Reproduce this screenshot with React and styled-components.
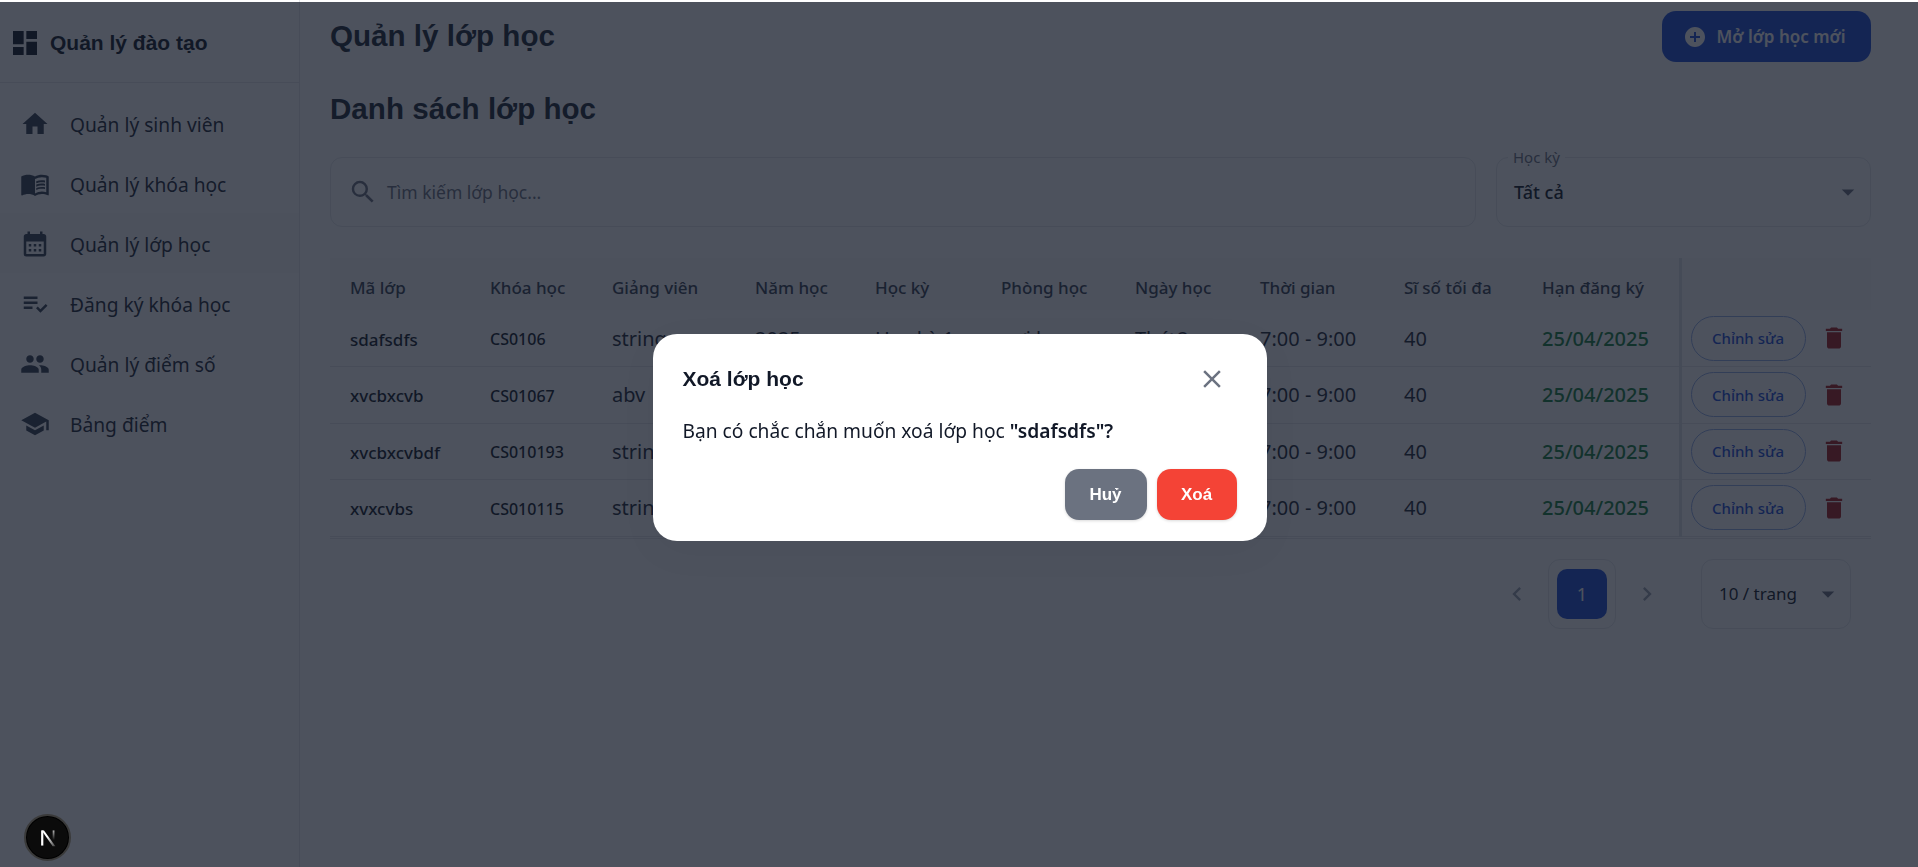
import React from 'react'
import styled, { createGlobalStyle } from 'styled-components'
import {
  MdDashboard, MdHome, MdMenuBook, MdCalendarMonth, MdPlaylistAddCheck, MdPeople, MdSchool,
  MdSearch, MdAddCircle, MdDelete, MdClose, MdChevronLeft, MdChevronRight, MdArrowDropDown,
} from 'react-icons/md'

const GlobalStyle = createGlobalStyle`
  html, body {
    margin: 0;
    padding: 0;
    height: 100%;
    overflow: hidden;
    background: #ffffff;
    font-family: "Noto Sans", "Liberation Sans", sans-serif;
    color: #111827;
  }
  * { box-sizing: border-box; }
`

const Page = styled.div`
  display: flex;
  height: 867px;
`

const Sidebar = styled.aside`
  width: 300px;
  flex-shrink: 0;
  border-right: 1px solid #e5e7eb;
  background: #ffffff;
`

const Brand = styled.div`
  display: flex;
  align-items: center;
  gap: 9px;
  height: 83px;
  padding: 4px 0 0 9px;
  border-bottom: 1px solid #e5e7eb;
  font-family: "Liberation Sans", sans-serif;
  font-size: 21px;
  font-weight: 700;
  color: #111827;
  svg { font-size: 32px; }
`

const Nav = styled.nav`
  padding-top: 10px;
`

const NavItem = styled.div`
  display: flex;
  align-items: center;
  height: 60px;
  padding-left: 20px;
  padding-top: 2px;
  font-size: 19.2px;
  color: #1f2937;
  background: ${({ $active }) => ($active ? '#f9fafb' : 'transparent')};
  svg { font-size: 30px; color: #374151; flex-shrink: 0; }
  span { margin-left: 20px; }
`

const Main = styled.main`
  flex: 1;
  min-width: 0;
  padding: 11px 47px 0 30px;
`

const TopBar = styled.div`
  display: flex;
  align-items: center;
  justify-content: space-between;
  height: 51px;
`

const Title = styled.h1`
  margin: 0 0 2px;
  font-family: "Liberation Sans", sans-serif;
  font-size: 29.6px;
  font-weight: 700;
  color: #1f2937;
`

const SubTitle = styled(Title)`
  margin: 28px 0 0;
  line-height: 38px;
`

const PrimaryButton = styled.button`
  display: flex;
  align-items: center;
  justify-content: center;
  gap: 10px;
  width: 209px;
  height: 51px;
  padding: 0 5px 0 0;
  border: 0;
  border-radius: 14px;
  background: #1d4ed8;
  color: #ffffff;
  font-family: inherit;
  font-size: 17px;
  font-weight: 600;
  svg { font-size: 24px; }
`

const Filters = styled.div`
  display: flex;
  gap: 20px;
  margin-top: 29px;
`

const SearchBox = styled.div`
  flex: 1;
  display: flex;
  align-items: center;
  gap: 9px;
  height: 70px;
  padding-left: 17px;
  border: 1px solid #e5e7eb;
  border-radius: 12px;
  font-size: 17.5px;
  color: #6b7280;
  svg { font-size: 30px; color: #6b7280; }
`

const SelectBox = styled.div`
  position: relative;
  display: flex;
  align-items: center;
  justify-content: space-between;
  width: ${({ $width }) => $width};
  height: 70px;
  padding: 0 7px 0 17px;
  border: 1px solid #e5e7eb;
  border-radius: 12px;
  font-size: 18px;
  font-weight: 500;
  color: #111827;
  svg { font-size: 30px; color: #6b7280; }
`

const FloatLabel = styled.label`
  position: absolute;
  top: -11px;
  left: 11px;
  padding: 0 5px;
  background: #ffffff;
  font-size: 15px;
  font-weight: 400;
  color: #6b7280;
`

const TableWrap = styled.div`
  width: 1541px;
  margin-top: 31px;
  padding-bottom: 1px;
  border-bottom: 1px solid #e5e7eb;
`

const Table = styled.table`
  width: 100%;
  border-collapse: collapse;
  table-layout: fixed;
`

const HeadCell = styled.th`
  height: 52px;
  padding: 6px 0 0 20px;
  background: #f9fafb;
  text-align: left;
  font-size: 17px;
  font-weight: 500;
  color: #374151;
`

const Cell = styled.td`
  height: 56.5px;
  padding: 0 0 0 20px;
  border-bottom: 1px solid #e5e7eb;
  font-size: 20px;
  color: #1f2937;
`

const CodeCell = styled(Cell)`
  padding-top: 2px;
  font-size: ${({ $size }) => $size};
  font-weight: 500;
  color: #111827;
`

const DateCell = styled(Cell)`
  font-weight: 500;
  color: #15803d;
`

const ActionHead = styled(HeadCell)`
  border-left: 3px solid #dfe1e5;
`

const ActionCell = styled(Cell)`
  padding: 0 0 0 9px;
  border-left: 3px solid #dfe1e5;
`

const Actions = styled.div`
  display: flex;
  align-items: center;
  gap: 14px;
  svg { font-size: 28px; color: #a61c1c; }
`

const EditButton = styled.button`
  width: 115px;
  height: 45px;
  border: 1px solid #93aee8;
  border-radius: 23px;
  background: transparent;
  color: #1d4ed8;
  font-family: inherit;
  font-size: 15px;
  font-weight: 500;
`

const Pager = styled.div`
  display: flex;
  align-items: center;
  justify-content: flex-end;
  margin: 20px 20px 0 0;
  > svg { font-size: 28px; color: #9ca3af; }
`

const PageFrame = styled.div`
  display: flex;
  align-items: center;
  justify-content: center;
  width: 68px;
  height: 70px;
  margin: 0 17px;
  border: 1px solid #e5e7eb;
  border-radius: 12px;
`

const PageNumber = styled.div`
  display: flex;
  align-items: center;
  justify-content: center;
  width: 50px;
  height: 50px;
  border-radius: 10px;
  background: #1d4ed8;
  color: #ffffff;
  font-size: 18px;
`

const PerPage = styled(SelectBox)`
  margin-left: 40px;
  font-size: 17px;
  font-weight: 400;
`

const DevBadge = styled.div`
  position: absolute;
  left: 24px;
  bottom: 6px;
  display: flex;
  align-items: center;
  justify-content: center;
  width: 47px;
  height: 47px;
  border-radius: 50%;
  background: #0b0b0b;
  border: 2px solid #3a3a3a;
  box-shadow: inset 0 0 0 1px #000000;
  z-index: 2;
  svg { width: 22px; height: 22px; }
`

const Backdrop = styled.div`
  position: fixed;
  inset: 2px 0 0 0;
  display: flex;
  align-items: flex-start;
  justify-content: center;
  padding: 332px 0 0 1px;
  background: rgba(17, 24, 39, 0.75);
`

const Modal = styled.div`
  width: 614px;
  height: 207px;
  padding: 30px;
  border-radius: 24px;
  background: #ffffff;
  box-shadow: 0 10px 40px rgba(0, 0, 0, 0.04);
`

const ModalHead = styled.div`
  display: flex;
  align-items: center;
  justify-content: space-between;
  height: 30px;
  font-family: "Liberation Sans", sans-serif;
  font-size: 21px;
  font-weight: 700;
  color: #111827;
  svg { font-size: 30px; color: #6b7280; margin-right: 10px; }
`

const ModalBody = styled.p`
  margin: 24px 0 0;
  font-size: 19.2px;
  line-height: 26px;
  color: #111827;
  b { font-weight: 600; }
`

const ModalActions = styled.div`
  display: flex;
  justify-content: flex-end;
  gap: 10px;
  margin-top: 25px;
`

const ModalButton = styled.button`
  width: ${({ $width }) => $width};
  height: 51px;
  border: 0;
  border-radius: 14px;
  background: ${({ $bg }) => $bg};
  color: #ffffff;
  font-family: "Liberation Sans", sans-serif;
  font-size: 17px;
  font-weight: 700;
  box-shadow: 0 1px 3px rgba(0, 0, 0, 0.15);
`

const navItems = [
  { label: 'Quản lý sinh viên', icon: MdHome },
  { label: 'Quản lý khóa học', icon: MdMenuBook },
  { label: 'Quản lý lớp học', icon: MdCalendarMonth, active: true },
  { label: 'Đăng ký khóa học', icon: MdPlaylistAddCheck },
  { label: 'Quản lý điểm số', icon: MdPeople },
  { label: 'Bảng điểm', icon: MdSchool },
]

const columns = [
  ['Mã lớp', 140], ['Khóa học', 122], ['Giảng viên', 143], ['Năm học', 120], ['Học kỳ', 126],
  ['Phòng học', 134], ['Ngày học', 125], ['Thời gian', 144], ['Sĩ số tối đa', 138], ['Hạn đăng ký', 158],
]

const rows = [
  ['sdafsdfs', 'CS0106', 'string'],
  ['xvcbxcvb', 'CS01067', 'abv'],
  ['xvcbxcvbdf', 'CS010193', 'string'],
  ['xvxcvbs', 'CS010115', 'string'],
]

const NextLogo = () => (
  <svg viewBox="0 0 16 16" fill="none">
    <defs>
      <linearGradient id="next-diag" x1="0" y1="0" x2="1" y2="1">
        <stop offset="0.4" stopColor="#ffffff" />
        <stop offset="1" stopColor="#ffffff" stopOpacity="0.2" />
      </linearGradient>
      <linearGradient id="next-bar" x1="0" y1="0" x2="0" y2="1">
        <stop offset="0" stopColor="#ffffff" stopOpacity="0.7" />
        <stop offset="1" stopColor="#ffffff" stopOpacity="0" />
      </linearGradient>
    </defs>
    <path d="M3 2.5h1.6v11H3z" fill="#fff" />
    <path d="M3.4 2.5h1.7L13.4 14h-2z" fill="url(#next-diag)" />
    <path d="M11.4 2.5h1.3v7h-1.3z" fill="url(#next-bar)" />
  </svg>
)

const App = () => (
  <>
    <GlobalStyle />
    <Page>
      <Sidebar>
        <Brand><MdDashboard />Quản lý đào tạo</Brand>
        <Nav>
          {navItems.map(({ label, icon: Icon, active }) => (
            <NavItem key={label} $active={active}><Icon /><span>{label}</span></NavItem>
          ))}
        </Nav>
      </Sidebar>
      <Main>
        <TopBar>
          <Title>Quản lý lớp học</Title>
          <PrimaryButton><MdAddCircle />Mở lớp học mới</PrimaryButton>
        </TopBar>
        <SubTitle>Danh sách lớp học</SubTitle>
        <Filters>
          <SearchBox><MdSearch />Tìm kiếm lớp học...</SearchBox>
          <SelectBox $width="375px">
            <FloatLabel>Học kỳ</FloatLabel>
            Tất cả
            <MdArrowDropDown />
          </SelectBox>
        </Filters>
        <TableWrap>
          <Table>
            <colgroup>
              {columns.map(([name, width]) => <col key={name} width={width} />)}
              <col width={191} />
            </colgroup>
            <thead>
              <tr>
                {columns.map(([name]) => <HeadCell key={name}>{name}</HeadCell>)}
                <ActionHead />
              </tr>
            </thead>
            <tbody>
              {rows.map(([code, course, teacher]) => (
                <tr key={code}>
                  <CodeCell $size="17px">{code}</CodeCell>
                  <CodeCell $size="16px">{course}</CodeCell>
                  <Cell>{teacher}</Cell>
                  <Cell>2025</Cell>
                  <Cell>Học kỳ 1</Cell>
                  <Cell>nơi học</Cell>
                  <Cell>Thứ 2</Cell>
                  <Cell>7:00 - 9:00</Cell>
                  <Cell>40</Cell>
                  <DateCell>25/04/2025</DateCell>
                  <ActionCell>
                    <Actions>
                      <EditButton>Chỉnh sửa</EditButton>
                      <MdDelete />
                    </Actions>
                  </ActionCell>
                </tr>
              ))}
            </tbody>
          </Table>
        </TableWrap>
        <Pager>
          <MdChevronLeft />
          <PageFrame><PageNumber>1</PageNumber></PageFrame>
          <MdChevronRight />
          <PerPage $width="150px">10 / trang<MdArrowDropDown /></PerPage>
        </Pager>
      </Main>
    </Page>
    <Backdrop>
      <Modal>
        <ModalHead>Xoá lớp học<MdClose /></ModalHead>
        <ModalBody>Bạn có chắc chắn muốn xoá lớp học <b>"sdafsdfs"?</b></ModalBody>
        <ModalActions>
          <ModalButton $width="82px" $bg="#6b7280">Huỷ</ModalButton>
          <ModalButton $width="80px" $bg="#f44336">Xoá</ModalButton>
        </ModalActions>
      </Modal>
    </Backdrop>
    <DevBadge><NextLogo /></DevBadge>
  </>
)

export default App
